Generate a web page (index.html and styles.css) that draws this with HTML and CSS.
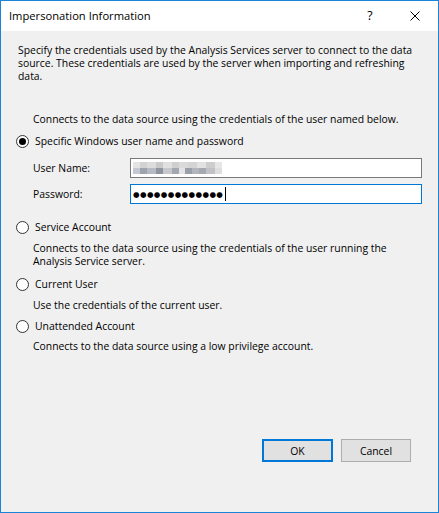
FILE: index.html
```html
<!DOCTYPE html>
<html lang="en">
<head>
<meta charset="utf-8">
<title>Impersonation Information</title>
<link rel="stylesheet" href="styles.css">
</head>
<body>
<div class="window">
  <div class="titlebar">
    <span class="title">Impersonation Information</span>
    <span class="help">?</span>
    <span class="close">
      <svg width="10" height="10" viewBox="0 0 10 10"><path d="M0.5 0.5 L9.5 9.5 M9.5 0.5 L0.5 9.5" stroke="#000" stroke-width="1" fill="none"/></svg>
    </span>
  </div>
  <div class="content">
    <p class="intro">Specify the credentials used by the Analysis Services server to connect to the data<br>source. These credentials are used by the server when importing and refreshing<br>data.</p>
    <p class="desc first">Connects to the data source using the credentials of the user named below.</p>
    <label class="radio-row r1"><span class="radio checked"></span><span>Specific Windows user name and password</span></label>
    <div class="creds">
      <span class="field-label">User Name:</span>
      <div class="input"><span class="mosaic"></span></div>
      <span class="field-label">Password:</span>
      <div class="input focused"><span class="dots">●●●●●●●●●●●●●</span><span class="caret"></span></div>
    </div>
    <label class="radio-row r2"><span class="radio"></span><span>Service Account</span></label>
    <p class="desc d2">Connects to the data source using the credentials of the user running the<br>Analysis Service server.</p>
    <label class="radio-row r3"><span class="radio"></span><span>Current User</span></label>
    <p class="desc d3">Use the credentials of the current user.</p>
    <label class="radio-row r4"><span class="radio"></span><span>Unattended Account</span></label>
    <p class="desc d4">Connects to the data source using a low privilege account.</p>
    <div class="buttons">
      <button class="btn default">OK</button>
      <button class="btn">Cancel</button>
    </div>
  </div>
</div>
</body>
</html>
```
FILE: styles.css
```css
html, body { margin: 0; padding: 0; }
body { font-family: "Open Sans", "Liberation Sans", sans-serif; font-size: 10.4px; color: #000; }
.window {
  width: 437px; height: 511px;
  border: 1px solid #1a84d8;
  display: flex; flex-direction: column;
  background: #f0f0f0;
}
.titlebar {
  height: 30px; background: #fff;
  display: flex; align-items: center;
}
.title { margin-left: 8px; font-size: 11.2px; margin-bottom: 2px; }
.help { margin-left: auto; font-size: 12.5px; width: 12px; text-align: center; margin-right: 34px; margin-bottom: 2px; }
.close { width: 10px; height: 10px; margin-right: 18px; display: flex; margin-bottom: 1px; }
.content {
  flex: 1;
  display: flex; flex-direction: column;
  padding: 13px 0 50px 15px;
  line-height: 13px;
}
p { margin: 0; }
.intro { margin-left: 2px; }
.desc { margin-left: 17px; }
.desc.first { margin-top: 30px; }
.radio-row { display: flex; align-items: center; height: 16px; gap: 6px; }
.r1 { margin-top: 7px; }
.radio {
  width: 11px; height: 11px; border: 1px solid #333; border-radius: 50%;
  background: #fff; display: flex; align-items: center; justify-content: center;
  flex: none;
}
.radio.checked::after { content: ""; width: 7px; height: 7px; border-radius: 50%; background: #000; }
.creds {
  margin-top: 9px; margin-left: 17px;
  display: grid; grid-template-columns: 97px 291px; row-gap: 6px; align-items: center;
}
.input {
  height: 18px; border: 1px solid #7a7a7a; background: #fff;
  display: flex; align-items: center; padding-left: 1px; box-sizing: content-box;
  width: 289px;
}
.input.focused { border-color: #0078d7; }
.mosaic {
  width: 89px; height: 12px; margin-left: 1px;
  background:
    linear-gradient(90deg, #e4e4e4 0 8%, #d2d2d2 8% 16%, #dcdcdc 16% 26%, #c9c9c9 26% 34%, #e0e0e0 34% 44%, #cfcfcf 44% 52%, #dadada 52% 62%, #d4d4d4 62% 72%, #e2e2e2 72% 82%, #cdcdcd 82% 92%, #e6e6e6 92% 100%) top / 100% 50% no-repeat,
    linear-gradient(90deg, #c4c8d0 0 8%, #9ea4ae 8% 16%, #b6bac2 16% 26%, #8f959f 26% 34%, #c6c8cc 34% 44%, #a3a8b0 44% 52%, #e4e4e4 52% 58%, #9aa0aa 58% 66%, #b2b6bc 66% 74%, #a5a9b0 74% 82%, #c0c2c6 82% 92%, #dedede 92% 100%) bottom / 100% 50% no-repeat;
}
.dots { font-size: 7.5px; letter-spacing: 0.4px; margin-left: 1px; font-family: "DejaVu Sans", sans-serif; }
.caret { width: 1px; height: 14px; background: #000; margin-left: 2px; }
.r2 { margin-top: 15px; }
.d2 { margin-top: 7px; }
.r3 { margin-top: 8px; }
.d3 { margin-top: 7px; }
.r4 { margin-top: 6px; }
.d4 { margin-top: 6px; }
.buttons {
  margin-top: auto; display: flex; justify-content: flex-end; gap: 8px;
  padding-right: 27px;
}
.btn {
  width: 70px; height: 23px; margin: 0; padding: 0;
  border: 1px solid #adadad; background: #e1e1e1;
  font-family: inherit; font-size: 10.4px; color: #000;
}
.btn.default { border: 2px solid #0078d7; width: 71px; }
```
